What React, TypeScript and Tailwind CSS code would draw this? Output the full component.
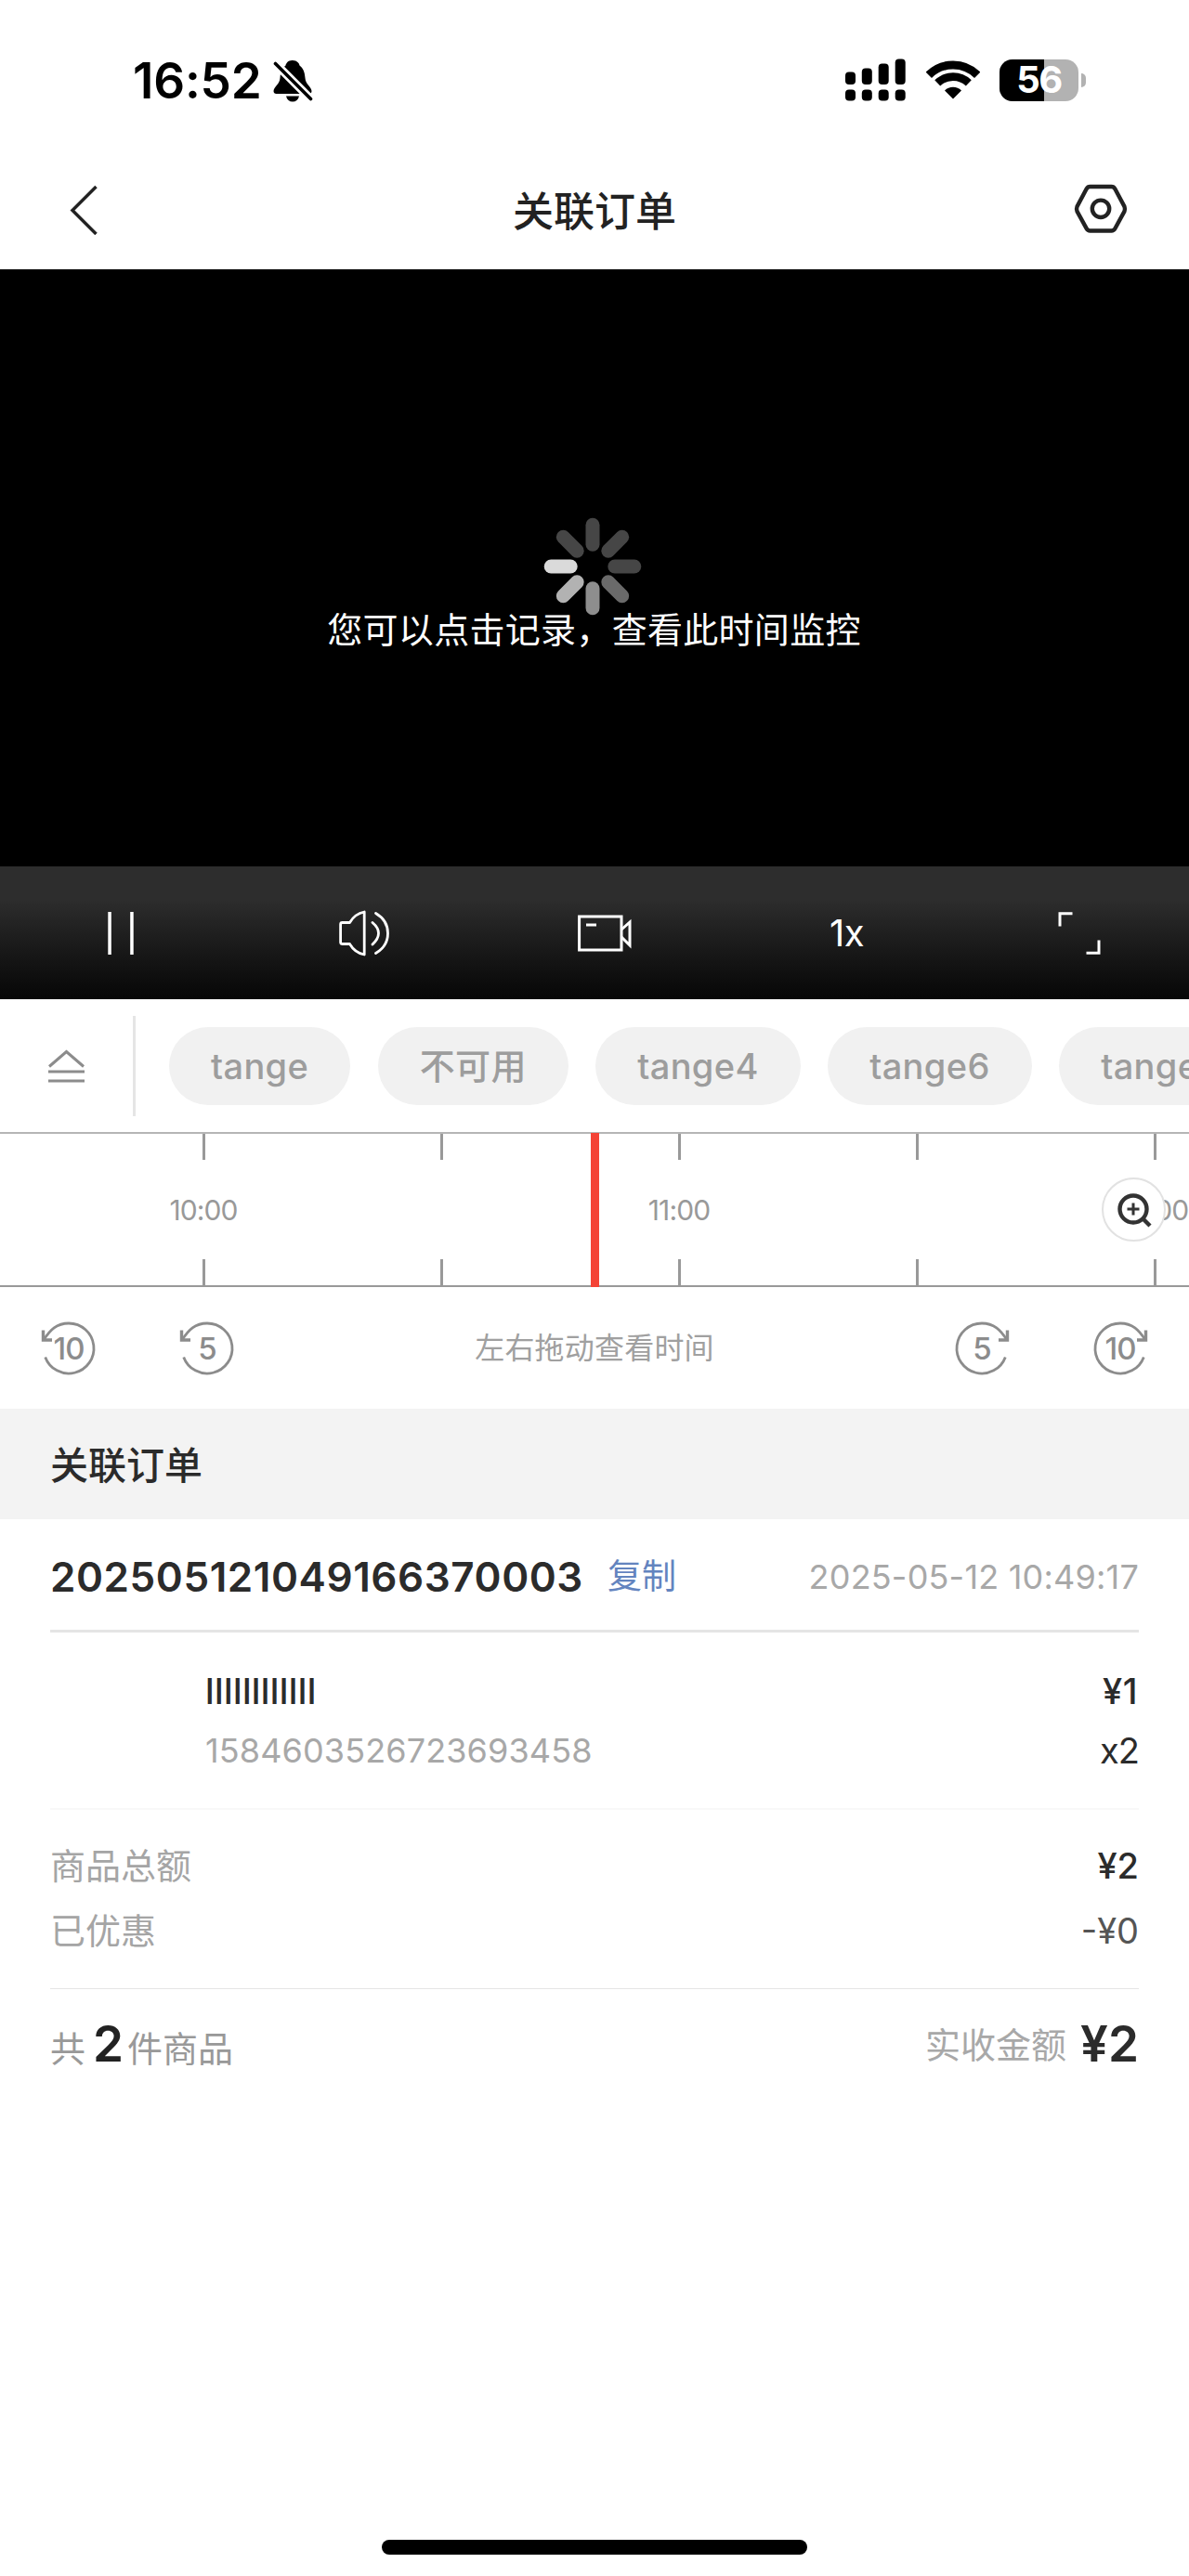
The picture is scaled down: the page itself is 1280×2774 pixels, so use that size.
import type { ReactNode } from 'react';

const CAMERAS = ['tange', '不可用', 'tange4', 'tange6', 'tange'];

// One cell per half hour, only full hours carry a label.
const TICKS = ['10:00', '', '11:00', '', '12:00'];

// Spinner blades, clockwise from the top.
const BLADES = ['#464646', '#464646', '#464646', '#6a6a6a', '#8e8e8e', '#b2b2b2', '#dadada', '#464646'];

function StatusBar() {
  return (
    <div className="flex h-[172px] items-center pl-[143px] pr-[111px] text-black">
      <span className="mt-[3px] w-[151px] text-[53px] font-semibold tracking-[-0.2px]">16:52</span>
      <svg className="mt-[3px]" width="44" height="48" viewBox="0 0 44 48">
        <path
          d="M21 1c-4.600-.3-7 3-7.500 5.500C9.500 9.500 8 13.500 7.500 20 7 27 1 29 .5 34c0 2 1.200 3 3 3h35c2 0 3-1 3-3C41 29 35 27 34.500 20 34 13.500 32.500 9.500 28.500 6.500 28 4 26 1.200 21 1z"
          fill="currentColor"
        />
        <path d="M14 39.500h14c-1 4-3.500 6-7 6s-6-2-7-6z" fill="currentColor" />
        <path d="M2 4l39 39" stroke="#fff" strokeWidth="9" />
        <path d="M2.500 4.500l38 38" stroke="currentColor" strokeWidth="3.600" strokeLinecap="round" />
      </svg>
      <div className="ml-auto flex items-center">
        <svg width="65" height="46" viewBox="0 0 65 46" fill="currentColor">
          <rect x="0" y="14.500" width="11" height="13.500" rx="4" />
          <rect x="17.800" y="10.500" width="11" height="17.500" rx="4" />
          <rect x="35.700" y="5.500" width="11" height="22.500" rx="4" />
          <rect x="53.700" y="0.500" width="11" height="27.500" rx="4" />
          <rect x="0" y="33.500" width="11" height="12" rx="4" />
          <rect x="17.800" y="33.500" width="11" height="12" rx="4" />
          <rect x="35.700" y="33.500" width="11" height="12" rx="4" />
          <rect x="53.700" y="33.500" width="11" height="12" rx="4" />
        </svg>
        <svg className="ml-[22px]" width="58" height="46" viewBox="-29 -44 58 46">
          <path d="M-26.200 -26.200A37 37 0 0 1 26.200 -26.200" fill="none" stroke="currentColor" strokeWidth="9" />
          <path d="M-16.800 -17.600A24.300 24.300 0 0 1 16.800 -17.600" fill="none" stroke="currentColor" strokeWidth="8.600" />
          <path d="M0 -.5L-9 -9.600A13 13 0 0 1 9 -9.600z" fill="currentColor" />
        </svg>
        <div className="relative ml-[21px] flex h-[45px] w-[85px] items-center justify-center rounded-[14px] bg-[#b2b2b2]">
          <div className="absolute inset-y-0 left-0 w-[48px] rounded-l-[14px] bg-black" />
          <span className="relative text-[40px] font-bold tracking-[-1.5px] text-white">56</span>
        </div>
        <div className="ml-[3px] h-[15px] w-[5px] rounded-r-full bg-[#b2b2b2]" />
      </div>
    </div>
  );
}

function NavBar() {
  return (
    <div className="flex h-[118px] items-center justify-between pl-[74px] pr-[65px] pb-[10px] text-[#222]">
      <svg width="51" height="54" viewBox="0 0 51 54" fill="none" stroke="currentColor" strokeWidth="3.500">
        <path d="M29.500 2L4 27.500 29.500 53" />
      </svg>
      <h1 className="pt-[3px] text-[44px] font-medium">关联订单</h1>
      <svg className="mb-[3px]" width="60" height="54" viewBox="0 0 60 54" fill="none" stroke="currentColor" strokeWidth="4.400">
        <path
          d="M18.500 3H41.500Q44 3 45.300 5.300L55.500 24.500Q56.500 27 55.500 29.500L45.300 48.200Q44 50.500 41.500 50.500H18.500Q16 50.500 14.700 48.200L4.500 29.500Q3.500 27 4.500 24.500L14.700 5.300Q16 3 18.500 3z"
        />
        <circle cx="30" cy="26.800" r="9.200" />
      </svg>
    </div>
  );
}

function Player() {
  return (
    <div className="flex h-[643px] flex-col items-center bg-black pt-[266px] text-white">
      <svg className="mr-[5px] shrink-0" width="108" height="108" viewBox="-54 -54 108 108">
        {BLADES.map((color, i) => (
          <rect key={i} x="-7.500" y="-52.300" width="15" height="36" rx="7.500" fill={color} transform={`rotate(${i * 45})`} />
        ))}
      </svg>
      <p className="mr-px -mt-[5px] text-[38px] tracking-[0.3px]">您可以点击记录，查看此时间监控</p>
    </div>
  );
}

function Controls() {
  return (
    <div className="flex h-[143px] items-center bg-linear-to-b from-[#2d2d2d] from-25% to-[#070707] text-white">
      <svg className="ml-[116px]" width="28" height="46" viewBox="0 0 28 46" fill="currentColor">
        <rect x="0.300" width="3.500" height="46" />
        <rect x="24.200" width="3.500" height="46" />
      </svg>
      <svg className="ml-[221px]" width="54" height="50" viewBox="0 0 54 50" fill="none" stroke="currentColor" strokeWidth="2.800">
        <path d="M3.500 13.500H11.500Q17 4 27.200 2V48Q17 46 11.500 36.500H3.500Q1.600 36.500 1.600 34.500V15.500Q1.600 13.500 3.500 13.500z" strokeLinejoin="round" />
        <path d="M36 13.500Q42.500 19 42.500 25T36 37" strokeLinecap="round" />
        <path d="M39.500 3.500Q52.500 11 52.500 25T39.500 46.500" strokeLinecap="round" />
      </svg>
      <svg className="ml-[203px]" width="58" height="42" viewBox="0 0 58 42" fill="none" stroke="currentColor" strokeWidth="3">
        <rect x="1.600" y="3" width="45.400" height="36" />
        <path d="M9 12h11" />
        <path d="M47 17l9-8v25l-9-9" />
      </svg>
      <span className="ml-[213px] w-[46px] text-[40px] tracking-[-0.5px]">1x</span>
      <svg className="ml-[200px]" width="46" height="46" viewBox="0 0 46 46" fill="none" stroke="currentColor" strokeWidth="3">
        <path d="M2 15.500V1.800H15.500" />
        <path d="M44 30.500V44.200H30.500" />
      </svg>
    </div>
  );
}

function CameraTabs() {
  return (
    <div className="flex h-[143px] items-center overflow-hidden">
      <svg className="ml-[52px] shrink-0" width="39" height="36" viewBox="0 0 39 36" fill="none" stroke="#8c8c8c" strokeWidth="3">
        <path d="M1 18.500L19.500 2.500 38 18.500M0 24h39M0 34h39" />
      </svg>
      <div className="ml-[52px] h-[108px] w-[3px] shrink-0 bg-[#e5e5e5]" />
      <div className="ml-[36px] flex shrink-0 gap-[29.5px]">
        {CAMERAS.map((name, i) => (
          <button
            key={i}
            className="flex h-[84px] shrink-0 items-center rounded-full bg-[#f1f1f1] px-[45px] text-[38px] font-medium tracking-[0.35px] text-[#9d9d9d]"
          >
            {name}
          </button>
        ))}
      </div>
    </div>
  );
}

function Timeline() {
  return (
    <div className="relative h-[167px] border-y-2 border-t-[#b5b5b5] border-b-[#999]">
      <div className="flex h-full overflow-hidden pl-[91px]">
        {TICKS.map((label, i) => (
          <div key={i} className="flex w-[256px] shrink-0 flex-col items-center justify-between">
            <div className="h-[28px] w-[3px] bg-[#999]" />
            <span className="text-[30px] tracking-[-0.9px] text-[#999]">{label}</span>
            <div className="h-[28px] w-[3px] bg-[#999]" />
          </div>
        ))}
      </div>
      {/* playhead */}
      <div className="absolute -top-px -bottom-0.5 left-[635.5px] w-[9px] bg-[#f44336]" />
      <button className="absolute left-[1186px] top-[47px] flex h-[69px] w-[69px] items-center justify-center rounded-full border-2 border-[#e2e2e2] bg-white">
        <svg width="38" height="38" viewBox="-18 -18 38 38" fill="none" stroke="#333" strokeWidth="4.400">
          <circle r="14.500" />
          <path d="M-6.500 0H6.500M0 -6.500V6.500" strokeWidth="3" />
          <path d="M10.500 10.500L18 18" />
        </svg>
      </button>
    </div>
  );
}

function SeekButton({ seconds, forward }: { seconds: number; forward?: boolean }) {
  return (
    <svg width="72" height="64" viewBox="-36 -32 72 64">
      <g transform={forward ? 'scale(-1 1)' : undefined} fill="none" stroke="#8c8c8c" strokeWidth="2.800">
        <path d="M-27 -9C-20 -20 -13 -27 0 -27A27 27 0 1 1 -25.300 9.400" />
        <path d="M-27.500 -19.500V-9H-18" strokeWidth="3.400" />
      </g>
      <text y="11.800" textAnchor="middle" fill="#8c8c8c" fontSize="33" fontWeight="500" letterSpacing="-1">
        {seconds}
      </text>
    </svg>
  );
}

function SeekBar() {
  return (
    <div className="flex h-[131px] items-center justify-between px-[38px]">
      <div className="flex gap-[77px]">
        <SeekButton seconds={10} />
        <SeekButton seconds={5} />
      </div>
      <span className="text-[32px] tracking-[0.2px] text-[#a0a0a0]">左右拖动查看时间</span>
      <div className="flex gap-[77px]">
        <SeekButton seconds={5} forward />
        <SeekButton seconds={10} forward />
      </div>
    </div>
  );
}

function Row({ className, children }: { className: string; children: ReactNode }) {
  return <div className={`flex items-center justify-between ${className}`}>{children}</div>;
}

function Order() {
  return (
    <section className="px-[54px] text-[38px] text-[#2b2b2b]">
      <Row className="h-[122px] border-b-[3px] border-[#e5e5e5] pt-[4px]">
        <span className="text-[44px] font-semibold tracking-[0.57px]">202505121049166370003</span>
        <a className="ml-[26px] mr-auto text-[37px] text-[#6384bf]">复制</a>
        <span className="text-[36px] tracking-[0.2px] text-[#a8a8a8]">2025-05-12 10:49:17</span>
      </Row>

      <div className="border-b-2 border-[#f8f8f8] pt-[31px] pb-[30px] pl-[167px]">
        <Row className="h-[64px] font-medium">
          <span className="tracking-[0.4px]">llllllllllll</span>
          <span className="pr-px tracking-[0.5px]">¥1</span>
        </Row>
        <Row className="h-[64px]">
          <span className="text-[36px] tracking-[0.12px] text-[#a8a8a8]">1584603526723693458</span>
          <span className="tracking-[-1px]">x2</span>
        </Row>
      </div>

      <div className="border-b border-[#e5e5e5] pt-[25px] pb-[27px]">
        <Row className="h-[70px]">
          <span className="text-[#a5a5a5]">商品总额</span>
          <span className="font-medium">¥2</span>
        </Row>
        <Row className="h-[70px]">
          <span className="text-[#a5a5a5]">已优惠</span>
          <span className="text-[#555]">-¥0</span>
        </Row>
      </div>

      <Row className="h-[119px]">
        <div className="flex items-baseline text-[#999]">
          共<span className="ml-[8px] mr-[5px] text-[53px] font-semibold tracking-[-1px] text-[#222]">2</span>件商品
        </div>
        <div className="flex items-center">
          <span className="text-[#a8a8a8]">实收金额</span>
          <span className="ml-[15px] text-[53px] font-semibold">¥2</span>
        </div>
      </Row>
    </section>
  );
}

export default function App() {
  return (
    <main className="flex h-[2774px] w-[1280px] flex-col overflow-hidden bg-white font-['Inter','Noto_Sans_CJK_SC',sans-serif] leading-none">
      <StatusBar />
      <NavBar />
      <Player />
      <Controls />
      <CameraTabs />
      <Timeline />
      <SeekBar />
      <h2 className="flex h-[119px] items-center bg-[#f3f3f3] pt-[3px] pl-[54px] text-[41px] font-medium text-[#2b2b2b]">关联订单</h2>
      <Order />
      <div className="mx-auto mt-auto mb-[23px] h-[16px] w-[458px] rounded-full bg-black" />
    </main>
  );
}
